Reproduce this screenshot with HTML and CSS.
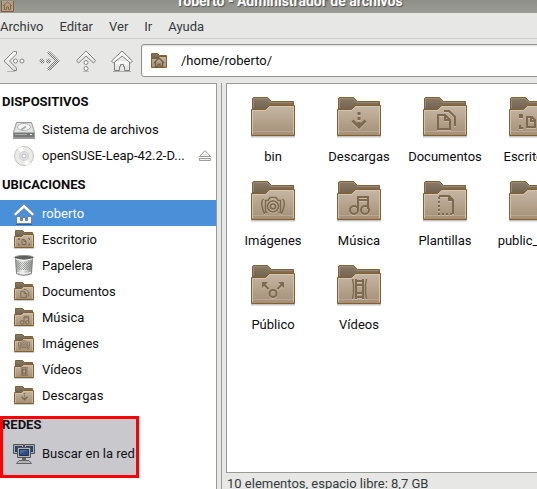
FILE: index.html
```html
<!DOCTYPE html>
<html lang="es">
<head>
<meta charset="utf-8">
<title>roberto - Administrador de archivos</title>
<link rel="stylesheet" href="styles.css">
</head>
<body>
<svg class="defs" aria-hidden="true">
  <defs>
    <linearGradient id="front" x1="0" y1="0" x2="0" y2="1"><stop offset="0" stop-color="#c6b7a3"/><stop offset="1" stop-color="#a48f76"/></linearGradient>
    <linearGradient id="back" x1="0" y1="0" x2="0" y2="1"><stop offset="0" stop-color="#8b7b66"/><stop offset="1" stop-color="#685a48"/></linearGradient>
    <linearGradient id="metal" x1="0" y1="0" x2="0" y2="1"><stop offset="0" stop-color="#fff"/><stop offset="1" stop-color="#dcdcda"/></linearGradient>
    <linearGradient id="steel" x1="0" y1="0" x2="1" y2="0"><stop offset="0" stop-color="#9b9d9b"/><stop offset=".4" stop-color="#f2f3f2"/><stop offset="1" stop-color="#8c8e8c"/></linearGradient>
    <pattern id="check" width="2" height="2" patternUnits="userSpaceOnUse"><path d="M0 0h1v1H0zM1 1h1v1H1z" fill="#777875"/></pattern>
    <pattern id="mesh" width="2" height="2" patternUnits="userSpaceOnUse"><path d="M0 0h1v1H0zM1 1h1v1H1z" fill="#858785"/></pattern>
  </defs>
  <symbol id="folder" viewBox="0 0 48 48">
    <path d="M2 42.5h44" stroke="#000" stroke-opacity=".22" stroke-width="2"/>
    <path d="M3.500 20V5q0-1.500 1.500-1.500H18.500L22.500 7.500H44.500V20z" fill="url(#back)" stroke="#7c6238"/>
    <path d="M4.500 14V4.500H18L22 8.500H43.500" fill="none" stroke="#a99a84" stroke-opacity=".6"/>
    <path d="M2.500 15.500H16.500L20.500 11.500H45.500V41.500H2.500z" fill="url(#front)" stroke="#85602d"/>
    <path d="M3.500 40V16.500H17L21 12.500H44.500V40" fill="none" stroke="#d6cab9" stroke-opacity=".8"/>
    <path d="M4 37.500H44" stroke="#c4b49e" stroke-opacity=".6"/>
  </symbol>
  <symbol id="folder-small" viewBox="0 0 24 24">
    <path d="M2 20.500h20" stroke="#000" stroke-opacity=".2"/>
    <path d="M3.500 10V2.500H10.500L12.500 4.500H20.500V10z" fill="url(#back)" stroke="#7c6238"/>
    <path d="M2.500 8.500H9.500L11.500 6.500H21.500V19.500H2.500z" fill="url(#front)" stroke="#85602d"/>
    <path d="M3.500 19V9.500H10L12 7.500H20.500V19" fill="none" stroke="#d6cab9" stroke-opacity=".6"/>
  </symbol>
  <!-- emblems, drawn on a 24-unit square -->
  <symbol id="e-down" viewBox="0 0 24 24"><path d="M12 2v3M12 7v3M12 12v4M5.500 10.500L12 17L18.500 10.500" fill="none" stroke="currentColor" stroke-width="3"/></symbol>
  <symbol id="e-docs" viewBox="0 0 24 24"><path d="M4 7H11L16 12V21H4zM11 7v5H16M10 3H15L21 9V18" fill="none" stroke="currentColor" stroke-width="2"/></symbol>
  <symbol id="e-desk" viewBox="0 0 24 24"><path d="M3 6V3H1V6M1 13v3h3M20 3h3v3M23 13v3h-3M8 5H13L16 8V15H8zM12 5v4H16" fill="none" stroke="currentColor" stroke-width="2"/></symbol>
  <symbol id="e-cam" viewBox="0 0 24 24"><path d="M2.500 5Q0 7 1 12T3.500 20M21.500 5Q24 7 23 12T20.500 20M6.500 18.500H4.500V6.500H7L9 3.500H15L17 6.500H19.500V18.500H17.500" fill="none" stroke="currentColor" stroke-width="1.500"/><circle cx="12" cy="12.500" r="5.500" fill="none" stroke="currentColor" stroke-width="1.500"/><circle cx="12" cy="12.500" r="2.500" fill="none" stroke="currentColor" stroke-width="1.500"/></symbol>
  <symbol id="e-music" viewBox="0 0 24 24"><path d="M11 15V3H21V15M11 6H21" fill="none" stroke="currentColor" stroke-width="2"/><circle cx="7" cy="16" r="4" fill="none" stroke="currentColor" stroke-width="2"/><circle cx="18" cy="16" r="4" fill="none" stroke="currentColor" stroke-width="2"/></symbol>
  <symbol id="e-tmpl" viewBox="0 0 24 24"><path d="M4 3H14L18 7V21" fill="none" stroke="currentColor" stroke-width="2"/><path d="M13 2v6h6z" fill="currentColor"/><path d="M4 4V21H18" fill="none" stroke="currentColor" stroke-width="2" stroke-dasharray="2 2"/></symbol>
  <symbol id="e-share" viewBox="0 0 24 24"><circle cx="12" cy="14.500" r="3.500" fill="none" stroke="currentColor" stroke-width="2"/><path d="M7.500 10L2.500 5M16.500 10L21.500 5" stroke="currentColor" stroke-width="2"/><path d="M1 3h6L1 9zM23 3h-6l6 6z" fill="currentColor"/></symbol>
  <symbol id="e-film" viewBox="0 0 24 24"><path d="M4.500 2L5.500 8V16L4.500 22M18.500 2L17.500 8V16L18.500 22" fill="none" stroke="currentColor" stroke-width="1.500"/><path d="M8 2V22M15 2V22M8 4H15M8 8H15V16H8zM8 20H15" fill="none" stroke="currentColor" stroke-width="2"/></symbol>
  <symbol id="e-home" viewBox="0 0 24 24"><path d="M2 14L12 4L22 14M5 12V21H10V16H14V21H19V12" fill="none" stroke="currentColor" stroke-width="2.500"/></symbol>
  <symbol id="house" viewBox="0 0 24 24">
    <path d="M3 22.500H21" stroke="#000" stroke-opacity=".25"/>
    <path d="M4.500 12V21.500H9.500V17.500H10.500V15.500H13.500V17.500H14.500V21.500H19.500V12" fill="url(#metal)" stroke="#80817e"/>
    <path d="M12 2L22.500 12L20.500 14L12 7L3.500 14L1.500 12z" fill="#f8f8f7" stroke="#80817e"/>
  </symbol>
  <symbol id="house-lit" viewBox="0 0 24 24">
    <path d="M4 22.500H20" stroke="#234b7a" stroke-opacity=".6"/>
    <path d="M12 2L22.500 12L20.500 14L12 6.500L3.500 14L1.500 12z" fill="#fff" stroke="#68717c" stroke-opacity=".7"/>
    <path d="M4.500 14.500H8.500V18.500H10.500V15.500H13.500V18.500H15.500V14.500H19.500V21.500H4.500z" fill="#f4f4f2" stroke="#68717c" stroke-opacity=".8"/>
  </symbol>
  <symbol id="disk" viewBox="0 0 24 24">
    <path d="M4.500 4.500H19.500L22.500 14.500V19.500H1.500V14.500z" fill="#e1e2e1" stroke="#969896"/>
    <path d="M2 14.500H22V19H2z" fill="#747775"/><path d="M3 16.500h12" stroke="#a9aba9"/><path d="M18 16.500h2" stroke="#eee"/>
    <ellipse cx="12" cy="9" rx="6.500" ry="3.500" fill="#f5f5f5" stroke="#b3b5b3"/><path d="M9 12L14 8.500" stroke="#aaa" stroke-width="2"/><path d="M1 20.500H23" stroke="#000" stroke-opacity=".4"/>
  </symbol>
  <symbol id="disc" viewBox="0 0 24 24">
    <circle cx="12" cy="12" r="9.500" fill="#ebebea" stroke="#c4c5c3"/><path d="M12 12L6 4.500A9 9 0 0 1 11 3zM12 12L18 19.500A9 9 0 0 1 13 21z" fill="#fff"/><circle cx="12" cy="12" r="4.500" fill="#e0e1e0" stroke="#cfd0cf"/><circle cx="12" cy="12" r="2" fill="#fff" stroke="#bbbcbb"/>
  </symbol>
  <symbol id="trash" viewBox="0 0 24 24">
    <path d="M3.500 4L4.500 19.500Q12 23 19.500 19.500L20.500 4z" fill="url(#steel)" stroke="#7b7d7b"/><path d="M5 8H19L18.500 16H5.500z" fill="url(#mesh)" fill-opacity=".75"/>
    <ellipse cx="12" cy="3.500" rx="9.500" ry="2" fill="#5d5f5d" stroke="#8f918f"/><path d="M3.500 5Q12 8 20.500 5M5 18.500Q12 21 19 18.500" fill="none" stroke="#f4f4f4"/>
  </symbol>
  <symbol id="network" viewBox="0 0 24 24">
    <path d="M1.500 2.500H11.500V11.500H1.500zM12.500 2.500H22.500V11.500H12.500z" fill="#d7d9d2" stroke="#62655e"/><path d="M3 4h7v6H3zM14 4h7v6h-7z" fill="#244d88"/>
    <path d="M5.500 5.500H18.500V15.500H5.500z" fill="#e5e6e1" stroke="#62655e"/><path d="M7.500 7.500H16.500V13.500H7.500z" fill="#2c5c9f" stroke="#183866"/><path d="M8 8h8L8 12z" fill="#5583bd"/>
    <path d="M10 16h4v2h-4z" fill="#777a72"/><path d="M7 18.500H17L19.500 21.500H4.500z" fill="#e5e6e1" stroke="#777a72"/>
  </symbol>
</svg>

<div class="window">
  <header class="titlebar">
    <svg class="titlebar-icon" viewBox="0 0 16 12" aria-hidden="true"><path d="M1.500 -2H13.500V10.500H1.500z" fill="#b49f82" stroke="#80603a"/><path d="M3 5L7.500 1L12 5M4.500 4V8.500H6.500V6H8.500V8.500H10.500V4" fill="none" stroke="#806a4c"/></svg>
    <h1 class="titlebar-text">roberto - Administrador de archivos</h1>
  </header>
  <nav class="menubar">
    <button type="button">Archivo</button>
    <button type="button">Editar</button>
    <button type="button">Ver</button>
    <button type="button">Ir</button>
    <button type="button">Ayuda</button>
  </nav>
  <div class="toolbar">
    <button type="button" class="tool" aria-label="Atrás"><svg viewBox="0 0 24 24"><path d="M5 22.500h8" stroke="#000" stroke-opacity=".2"/><path d="M11.500 2.500L2 12L11.500 21.500H14.500V19L7.500 12L14.500 5V2.500z" fill="url(#metal)" stroke="#858683"/><circle cx="13.500" cy="12" r="2" fill="#fff" stroke="#858683"/><circle cx="20" cy="12" r="2" fill="#fff" stroke="#858683"/></svg></button>
    <button type="button" class="tool" aria-label="Adelante" disabled><svg viewBox="0 0 24 24"><path d="M12.500 2.500L22 12L12.500 21.500H9.500V19L16.500 12L9.500 5V2.500z" fill="url(#check)"/><circle cx="10.500" cy="12" r="2.500" fill="url(#check)"/><circle cx="4" cy="12" r="2.500" fill="url(#check)"/></svg></button>
    <button type="button" class="tool" aria-label="Subir"><svg viewBox="0 0 24 24"><path d="M9 22.500h6" stroke="#000" stroke-opacity=".2"/><path d="M12 2L21.500 11.500L19.500 14L12 7L4.500 14L2.500 11.500z" fill="url(#metal)" stroke="#858683"/><circle cx="12" cy="13.500" r="2" fill="#fff" stroke="#858683"/><circle cx="12" cy="19.500" r="2" fill="#fff" stroke="#858683"/></svg></button>
    <button type="button" class="tool" aria-label="Carpeta personal"><svg><use href="#house"/></svg></button>
    <label class="location">
      <svg viewBox="0 0 20 20" aria-hidden="true"><path d="M2.500 8V2.500H8.500L10.500 4.500H17.500V8z" fill="url(#back)" stroke="#7c6238"/><path d="M2.500 7.500H8.500L10.500 5.500H17.500V16.500H2.500z" fill="url(#front)" stroke="#85602d"/><use href="#e-home" x="4" y="5" width="12" height="12" color="#6f5c42"/></svg>
      <input type="text" value="/home/roberto/" aria-label="Ubicación">
    </label>
  </div>
  <div class="body">
    <aside class="sidebar">
      <section class="group">
        <h2>DISPOSITIVOS</h2>
        <a class="place" href="#"><svg><use href="#disk"/></svg><span>Sistema de archivos</span></a>
        <div class="place"><svg><use href="#disc"/></svg><a href="#">openSUSE-Leap-42.2-D...</a>
          <button type="button" class="eject" aria-label="Expulsar"><svg viewBox="0 0 14 14"><path d="M7 1.500L12.500 7.500H1.500zM1.500 9.500H12.500V11.500H1.500z" fill="#f2f2f1" stroke="#9c9d9a"/></svg></button></div>
      </section>
      <section class="group">
        <h2>UBICACIONES</h2>
        <a class="place selected" href="#"><svg><use href="#house-lit"/></svg><span>roberto</span></a>
        <a class="place" href="#"><svg><use href="#folder-small"/><use class="emblem" href="#e-desk" x="6" y="9" width="12" height="12"/></svg><span>Escritorio</span></a>
        <a class="place" href="#"><svg><use href="#trash"/></svg><span>Papelera</span></a>
        <a class="place" href="#"><svg><use href="#folder-small"/><use class="emblem" href="#e-docs" x="7" y="8" width="11" height="11"/></svg><span>Documentos</span></a>
        <a class="place" href="#"><svg><use href="#folder-small"/><use class="emblem" href="#e-music" x="7" y="9" width="11" height="11"/></svg><span>Música</span></a>
        <a class="place" href="#"><svg><use href="#folder-small"/><use class="emblem" href="#e-cam" x="6" y="7" width="12" height="12"/></svg><span>Imágenes</span></a>
        <a class="place" href="#"><svg><use href="#folder-small"/><use class="emblem" href="#e-film" x="7" y="8" width="11" height="11"/></svg><span>Vídeos</span></a>
        <a class="place" href="#"><svg><use href="#folder-small"/><use class="emblem" href="#e-down" x="7" y="8" width="11" height="11"/></svg><span>Descargas</span></a>
      </section>
      <section class="group marked">
        <h2>REDES</h2>
        <a class="place" href="#"><svg><use href="#network"/></svg><span>Buscar en la red</span></a>
      </section>
    </aside>
    <div class="handle"></div>
    <main class="content">
      <div class="files">
        <a class="file" href="#"><svg><use href="#folder"/></svg><span>bin</span></a>
        <a class="file" href="#"><svg><use href="#folder"/><use class="shine" href="#e-down" x="12" y="17" width="24" height="24"/><use class="emblem" href="#e-down" x="12" y="16" width="24" height="24"/></svg><span>Descargas</span></a>
        <a class="file" href="#"><svg><use href="#folder"/><use class="shine" href="#e-docs" x="13" y="15" width="24" height="24"/><use class="emblem" href="#e-docs" x="13" y="14" width="24" height="24"/></svg><span>Documentos</span></a>
        <a class="file" href="#"><svg><use href="#folder"/><use class="shine" href="#e-desk" x="12" y="19" width="24" height="24"/><use class="emblem" href="#e-desk" x="12" y="18" width="24" height="24"/></svg><span>Escritorio</span></a>
        <a class="file" href="#"><svg><use href="#folder"/><use class="shine" href="#e-cam" x="12" y="17" width="24" height="24"/><use class="emblem" href="#e-cam" x="12" y="16" width="24" height="24"/></svg><span>Imágenes</span></a>
        <a class="file" href="#"><svg><use href="#folder"/><use class="shine" href="#e-music" x="12" y="17" width="24" height="24"/><use class="emblem" href="#e-music" x="12" y="16" width="24" height="24"/></svg><span>Música</span></a>
        <a class="file" href="#"><svg><use href="#folder"/><use class="shine" href="#e-tmpl" x="14" y="16" width="24" height="24"/><use class="emblem" href="#e-tmpl" x="14" y="15" width="24" height="24"/></svg><span>Plantillas</span></a>
        <a class="file" href="#"><svg><use href="#folder"/></svg><span>public_html</span></a>
        <a class="file" href="#"><svg><use href="#folder"/><use class="shine" href="#e-share" x="12" y="18" width="24" height="24"/><use class="emblem" href="#e-share" x="12" y="17" width="24" height="24"/></svg><span>Público</span></a>
        <a class="file" href="#"><svg><use href="#folder"/><use class="shine" href="#e-film" x="13" y="16" width="24" height="24"/><use class="emblem" href="#e-film" x="13" y="15" width="24" height="24"/></svg><span>Vídeos</span></a>
      </div>
      <footer class="status">10 elementos, espacio libre: 8,7 GB</footer>
    </main>
  </div>
</div>
</body>
</html>
```
FILE: styles.css
```css
*,
*::after { box-sizing: border-box; }

body {
  margin: 0;
  background: #e7e7e5;
  color: #0c0c0c;
  font: 13px/16px Roboto, "Noto Sans", sans-serif;
}

a { color: inherit; text-decoration: none; }

button {
  padding: 0;
  border: 0;
  background: none;
  color: inherit;
  font: inherit;
}

.defs { position: absolute; width: 0; height: 0; }

.window {
  display: flex;
  flex-direction: column;
  height: 100vh;
  overflow: hidden;
}

.titlebar {
  display: flex;
  flex: none;
  align-items: flex-end;
  height: 13px;
  overflow: hidden;
  background: linear-gradient(#8e8f89, #9b9c95);
}

.titlebar-icon { flex: none; width: 16px; height: 12px; }

.titlebar-text {
  flex: 1;
  margin: 0 0 4px 28px;
  color: #fff;
  font-size: 14px;
  font-weight: 700;
  text-align: center;
  text-shadow: 1px 1px 1px #555;
}

.menubar {
  display: flex;
  flex: none;
  gap: 16px;
  height: 26px;
  padding-top: 2px;
  border-bottom: 1px solid #cdcdca;
  color: #343b3e;
}

.toolbar {
  display: flex;
  flex: none;
  align-items: center;
  height: 44px;
  margin: 0 -8px 0 -4px;
  padding-bottom: 1px;
}

.tool { display: flex; flex: none; justify-content: center; width: 36px; }
.tool svg { width: 24px; height: 24px; }

.location {
  display: flex;
  flex: 1;
  align-items: center;
  gap: 12px;
  height: 33px;
  margin-left: 1px;
  padding-left: 7px;
  border: 1px solid #91938e;
  border-radius: 3px;
  background: #fff;
  box-shadow: inset 0 1px 2px #ddd;
}

.location svg { flex: none; width: 20px; height: 20px; }

.location input {
  flex: 1;
  min-width: 0;
  padding: 0;
  border: 0;
  outline: 0;
  background: none;
  color: inherit;
  font: inherit;
}

.body { display: flex; flex: 1; min-height: 0; }

.sidebar {
  flex: none;
  width: 217px;
  padding-top: 2px;
  border: solid #989a96;
  border-width: 1px 1px 0 0;
  background: #fff;
}

.group h2 {
  margin: 0;
  padding-left: 2px;
  font-size: 13px;
  font-weight: 700;
  line-height: 31px;
}

.place {
  display: flex;
  align-items: center;
  gap: 6px;
  height: 26px;
  padding: 0 4px 0 12px;
}

.group + .group .place { padding-top: 2px; }

.place > svg { flex: none; width: 24px; height: 24px; }
.selected { background: #4a90d9; color: #fff; }
.eject { display: flex; margin-left: auto; }
.eject svg { width: 14px; height: 14px; }

.emblem { color: #7c694f; }
.shine { color: #d4c8b6; opacity: 0.7; }

.marked { position: relative; padding-top: 1px; }

.marked::after {
  content: "";
  position: absolute;
  top: 8px;
  left: 0;
  width: 139px;
  height: 62px;
  border: 3px solid #f00;
  background: rgb(40 36 56 / 25%);
  background-clip: padding-box;
  pointer-events: none;
}

.handle { flex: none; width: 5px; border-right: 1px solid #989a96; }

.content {
  display: flex;
  flex: 1;
  flex-direction: column;
  min-width: 0;
  padding-left: 4px;
}

.files {
  display: grid;
  flex: 1;
  grid-template-columns: repeat(4, 86px);
  grid-auto-rows: 84px;
  padding: 6px 3px;
  overflow: hidden;
  border: solid #989a96;
  border-width: 1px 0 1px 1px;
  background: #fff;
}

.file {
  display: flex;
  flex-direction: column;
  align-items: center;
  gap: 7px;
  padding-top: 4px;
}

.file svg { width: 48px; height: 48px; }

.status {
  flex: none;
  height: 16px;
  padding-left: 1px;
  overflow: hidden;
  color: #343b3e;
  line-height: 22px;
}
```
